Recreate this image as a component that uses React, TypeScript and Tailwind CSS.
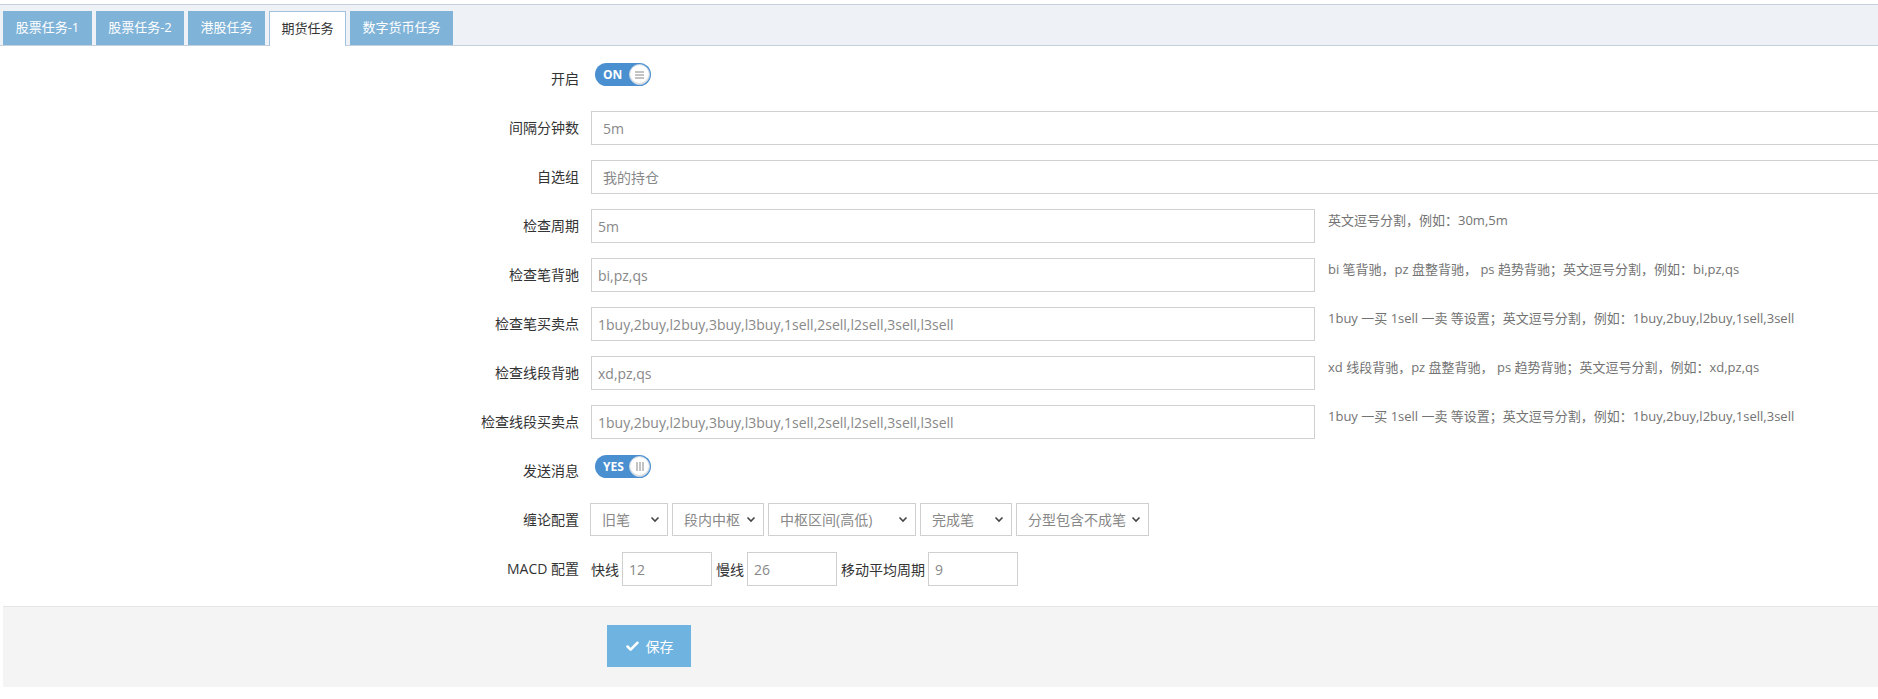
import { Check } from "lucide-react"

const font = { fontFamily: '"Open Sans", "Noto Sans CJK SC", sans-serif' }

const tabs = [
    { t: "股票任务-1", w: "w-[89px]" },
    { t: "股票任务-2", w: "w-[88px]" },
    { t: "港股任务", w: "w-[77px]" },
    { t: "期货任务", w: "w-[77px]" },
    { t: "数字货币任务", w: "w-[103px]" },
]

const Switch = ({ label, knob }: { label: string; knob: "h" | "v" }) => (
    <div className="ml-[4px] mt-[1px] flex h-[23px] w-[56px] items-center justify-between rounded-full bg-[#4a8fd0] pl-[8px] pr-[1px]">
        <span className="text-[12px] font-bold text-white">{label}</span>
        <span className="flex h-[21px] w-[21px] items-center justify-center rounded-full border border-[#c9d6e3] bg-white shadow-[inset_0_-1px_1px_rgba(0,0,0,0.15)]">
            {knob === "h" ? (
                <svg width="9" height="8" viewBox="0 0 9 8">
                    <path d="M0 1h9M0 4h9M0 7h9" stroke="#888" strokeWidth="1" />
                </svg>
            ) : (
                <svg width="8" height="9" viewBox="0 0 8 9">
                    <path d="M1 0v9M4 0v9M7 0v9" stroke="#888" strokeWidth="1" />
                </svg>
            )}
        </span>
    </div>
)

const Row = ({ label, children }: { label: string; children: React.ReactNode }) => (
    <div className="flex items-start mb-[15px] min-h-[34px]">
        <div className="w-[579px] shrink-0 pt-[7px] text-right text-[14px] leading-[20px] text-[#333]">{label}</div>
        <div className="ml-[12px] flex items-start">{children}</div>
    </div>
)

const Input = ({ value, w, pl = "pl-[6px]" }: { value: string; w: string; pl?: string }) => (
    <div className={`${w} ${pl} h-[34px] shrink-0 border border-[#d0d0d0] flex items-center text-[14px] text-[#888]`}>{value}</div>
)

const Help = ({ text }: { text: string }) => (
    <div className="ml-[13px] pt-[2px] text-[13px] leading-[18px] text-[#737373] whitespace-nowrap">{text}</div>
)

const Select = ({ value, w }: { value: string; w: string }) => (
    <div className={`${w} h-[33px] shrink-0 border border-[#d0d0d0] flex items-center justify-between pl-[11px] pr-[7px] text-[14px] text-[#888]`}>
        <span>{value}</span>
        <svg width="10" height="7" viewBox="0 0 10 7">
            <path d="M1.5 1.5L5 5l3.5-3.5" fill="none" stroke="#444" strokeWidth="1.6" />
        </svg>
    </div>
)

export default function App() {
    return (
        <div className="w-full min-h-[699px] bg-white overflow-hidden" style={font}>
            <div className="pt-[4px]">
                <div className="h-[42px] border-t border-b border-[#c5d0dc] bg-[#eef1f5] flex items-end gap-[4px] pl-[3px]">
                    {tabs.map(({ t, w }, i) =>
                        i === 3 ? (
                            <div key={t} className={`${w} h-[35px] -mb-px flex items-center justify-center bg-white border border-b-0 border-[#9fc3df] text-[13px] text-[#333]`}>
                                {t}
                            </div>
                        ) : (
                            <div key={t} className={`${w} h-[34px] flex items-center justify-center bg-[#7fb3d8] text-[13px] text-white`}>
                                {t}
                            </div>
                        )
                    )}
                </div>
            </div>

            <div className="pt-[16px]">
                <Row label="开启">
                    <Switch label="ON" knob="h" />
                </Row>
                <Row label="间隔分钟数">
                    <Input value="5m" w="w-[1400px]" pl="pl-[11px]" />
                </Row>
                <Row label="自选组">
                    <Input value="我的持仓" w="w-[1400px]" pl="pl-[11px]" />
                </Row>
                <Row label="检查周期">
                    <Input value="5m" w="w-[724px]" />
                    <Help text="英文逗号分割，例如：30m,5m" />
                </Row>
                <Row label="检查笔背驰">
                    <Input value="bi,pz,qs" w="w-[724px]" />
                    <Help text="bi 笔背驰，pz 盘整背驰， ps 趋势背驰；英文逗号分割，例如：bi,pz,qs" />
                </Row>
                <Row label="检查笔买卖点">
                    <Input value="1buy,2buy,l2buy,3buy,l3buy,1sell,2sell,l2sell,3sell,l3sell" w="w-[724px]" />
                    <Help text="1buy 一买 1sell 一卖 等设置；英文逗号分割，例如：1buy,2buy,l2buy,1sell,3sell" />
                </Row>
                <Row label="检查线段背驰">
                    <Input value="xd,pz,qs" w="w-[724px]" />
                    <Help text="xd 线段背驰，pz 盘整背驰， ps 趋势背驰；英文逗号分割，例如：xd,pz,qs" />
                </Row>
                <Row label="检查线段买卖点">
                    <Input value="1buy,2buy,l2buy,3buy,l3buy,1sell,2sell,l2sell,3sell,l3sell" w="w-[724px]" />
                    <Help text="1buy 一买 1sell 一卖 等设置；英文逗号分割，例如：1buy,2buy,l2buy,1sell,3sell" />
                </Row>
                <Row label="发送消息">
                    <Switch label="YES" knob="v" />
                </Row>
                <Row label="缠论配置">
                    <div className="flex gap-[4px] -ml-[1px]">
                        <Select value="旧笔" w="w-[78px]" />
                        <Select value="段内中枢" w="w-[92px]" />
                        <Select value="中枢区间(高低)" w="w-[148px]" />
                        <Select value="完成笔" w="w-[92px]" />
                        <Select value="分型包含不成笔" w="w-[133px]" />
                    </div>
                </Row>
                <Row label="MACD 配置">
                    <div className="flex items-center gap-[3px] text-[14px] text-[#333]">
                        <span>快线</span>
                        <Input value="12" w="w-[90px]" />
                        <span className="ml-[1px]">慢线</span>
                        <Input value="26" w="w-[90px]" />
                        <span className="ml-[1px]">移动平均周期</span>
                        <Input value="9" w="w-[90px]" />
                    </div>
                </Row>
            </div>

            <div className="ml-[3px] mt-[20px] h-[81px] border-t border-[#e5e5e5] bg-[#f4f4f4] pt-[18px] pl-[604px]">
                <button className="h-[42px] w-[84px] bg-[#6fb3e0] text-white text-[14px] flex items-center justify-center gap-[6px]">
                    <Check size={15} strokeWidth={4} />
                    保存
                </button>
            </div>
        </div>
    )
}
